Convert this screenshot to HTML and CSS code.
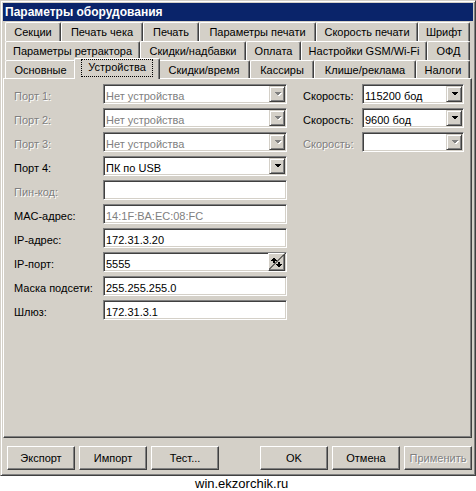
FILE: index.html
```html
<!DOCTYPE html>
<html lang="ru">
<head>
<meta charset="utf-8">
<title>Параметры оборудования</title>
<link rel="stylesheet" href="styles.css">
</head>
<body>
<div class="window">
  <div class="titlebar">Параметры оборудования</div>
  <div class="tabs">
    <div class="tabrow row1">
      <div class="tab">Секции</div>
      <div class="tab">Печать чека</div>
      <div class="tab">Печать</div>
      <div class="tab">Параметры печати</div>
      <div class="tab">Скорость печати</div>
      <div class="tab">Шрифт</div>
    </div>
    <div class="tabrow row2">
      <div class="tab">Параметры ретрактора</div>
      <div class="tab">Скидки/надбавки</div>
      <div class="tab">Оплата</div>
      <div class="tab">Настройки GSM/Wi-Fi</div>
      <div class="tab">ОФД</div>
    </div>
    <div class="tabrow row3">
      <div class="tab">Основные</div>
      <div class="tab active"><span class="focus">Устройства</span></div>
      <div class="tab">Скидки/время</div>
      <div class="tab">Кассиры</div>
      <div class="tab">Клише/реклама</div>
      <div class="tab">Налоги</div>
    </div>
  </div>
  <div class="panel">
    <div class="form">
      <div class="lbl dis">Порт 1:</div>
      <div class="field"><span class="val grey">Нет устройства</span><span class="ddbtn"><svg class="arr" width="8" height="5" viewBox="0 0 8 5" shape-rendering="crispEdges"><polygon points="1,1 8,1 4.5,4.5" fill="#fff"/><polygon points="0,0 7,0 3.5,3.5" fill="#808080"/></svg></span></div>
      <div class="lbl r-lbl">Скорость:</div>
      <div class="field r-field"><span class="val">115200 бод</span><span class="ddbtn"><svg class="arr" width="8" height="5" viewBox="0 0 8 5" shape-rendering="crispEdges"><polygon points="0,0 7,0 3.5,3.5" fill="#000"/></svg></span></div>

      <div class="lbl dis">Порт 2:</div>
      <div class="field"><span class="val grey">Нет устройства</span><span class="ddbtn"><svg class="arr" width="8" height="5" viewBox="0 0 8 5" shape-rendering="crispEdges"><polygon points="1,1 8,1 4.5,4.5" fill="#fff"/><polygon points="0,0 7,0 3.5,3.5" fill="#808080"/></svg></span></div>
      <div class="lbl r-lbl">Скорость:</div>
      <div class="field r-field"><span class="val">9600 бод</span><span class="ddbtn"><svg class="arr" width="8" height="5" viewBox="0 0 8 5" shape-rendering="crispEdges"><polygon points="0,0 7,0 3.5,3.5" fill="#000"/></svg></span></div>

      <div class="lbl dis">Порт 3:</div>
      <div class="field"><span class="val grey">Нет устройства</span><span class="ddbtn"><svg class="arr" width="8" height="5" viewBox="0 0 8 5" shape-rendering="crispEdges"><polygon points="1,1 8,1 4.5,4.5" fill="#fff"/><polygon points="0,0 7,0 3.5,3.5" fill="#808080"/></svg></span></div>
      <div class="lbl r-lbl dis">Скорость:</div>
      <div class="field r-field"><span class="val"></span><span class="ddbtn"><svg class="arr" width="8" height="5" viewBox="0 0 8 5" shape-rendering="crispEdges"><polygon points="1,1 8,1 4.5,4.5" fill="#fff"/><polygon points="0,0 7,0 3.5,3.5" fill="#808080"/></svg></span></div>

      <div class="lbl">Порт 4:</div>
      <div class="field"><span class="val">ПК по USB</span><span class="ddbtn"><svg class="arr" width="8" height="5" viewBox="0 0 8 5" shape-rendering="crispEdges"><polygon points="0,0 7,0 3.5,3.5" fill="#000"/></svg></span></div>

      <div class="lbl dis">Пин-код:</div>
      <div class="field"><span class="val"></span></div>

      <div class="lbl">MAC-адрес:</div>
      <div class="field"><span class="val grey">14:1F:BA:EC:08:FC</span></div>

      <div class="lbl">IP-адрес:</div>
      <div class="field"><span class="val">172.31.3.20</span></div>

      <div class="lbl">IP-порт:</div>
      <div class="field"><span class="val">5555</span><span class="spin"><svg width="15" height="15" viewBox="0 0 15 15" shape-rendering="crispEdges"><path d="M0 14.5 L14.5 0" stroke="#000" stroke-width="1" shape-rendering="auto"/><polygon points="1.5,6 8.5,6 5,2.5" fill="#000"/><rect x="4" y="6" width="2" height="2" fill="#000"/><polygon points="6.5,9 13.5,9 10,12.5" fill="#000"/><rect x="9" y="7" width="2" height="2" fill="#000"/></svg></span></div>

      <div class="lbl">Маска подсети:</div>
      <div class="field"><span class="val">255.255.255.0</span></div>

      <div class="lbl">Шлюз:</div>
      <div class="field"><span class="val">172.31.3.1</span></div>
    </div>
  </div>
  <div class="btnrow">
    <div class="btn">Экспорт</div>
    <div class="btn">Импорт</div>
    <div class="btn">Тест...</div>
    <div class="spacer"></div>
    <div class="btn">OK</div>
    <div class="btn">Отмена</div>
    <div class="btn dis">Применить</div>
  </div>
</div>
<div class="watermark">win.ekzorchik.ru</div>
</body>
</html>
```
FILE: styles.css
```css
* { box-sizing: border-box; }

body {
  margin: 0;
  background: #fff;
  font-family: "Liberation Sans", Arial, sans-serif;
  font-size: 11px;
  color: #000;
}

.window {
  width: 476px;
  height: 476px;
  background: #d4d0c8;
  border: 1px solid;
  border-color: #d4d0c8 #404040 #404040 #d4d0c8;
  box-shadow: inset 1px 1px #fff, inset -1px -1px #808080;
  padding: 2px;
  display: flex;
  flex-direction: column;
}

.titlebar {
  height: 18px;
  background: #0a246a;
  color: #fff;
  font-weight: bold;
  font-size: 12px;
  line-height: 18px;
  padding-left: 2px;
  white-space: nowrap;
}

.tabs {
  margin-top: 1px;
  padding: 0 2px;
}

.tabrow {
  display: grid;
  height: 19px;
}

.row1 { grid-template-columns: 56px 82px 56px 117px 102px 52px; }
.row2 { grid-template-columns: 135px 106px 55px 126px 43px; }
.row3 { grid-template-columns: 71px 82px 92px 64px 102px 54px; height: 18px; }

.tab {
  background: #d4d0c8;
  border-top: 1px solid #fff;
  border-left: 1px solid #fff;
  border-right: 1px solid #404040;
  border-radius: 2px 2px 0 0;
  box-shadow: inset -1px 0 #808080;
  text-align: center;
  line-height: 13px;
  padding-top: 3px;
  white-space: nowrap;
}

.tab.active {
  position: relative;
  z-index: 1;
  margin: -2px -2px -1px -2px;
  padding-top: 0;
}

.focus {
  display: inline-block;
  border: 1px dotted #000;
  padding: 1px 6px 2px 6px;
  line-height: 13px;
}

.panel {
  height: 360px;
  margin-right: 1px;
  border: 1px solid;
  border-color: #fff #404040 #404040 #fff;
  box-shadow: inset -1px -1px #808080;
  padding: 5px 0 0 10px;
}

.form {
  display: grid;
  grid-template-columns: 89px 184px 16px 59px 102px;
  grid-auto-rows: 20px;
  row-gap: 4px;
}

.lbl {
  grid-column: 1;
  line-height: 20px;
  padding-top: 2px;
  white-space: nowrap;
}

.form > .field { grid-column: 2; }

.form > .r-lbl { grid-column: 4; }
.form > .r-field { grid-column: 5; }

.dis {
  color: #808080;
  text-shadow: 1px 1px #fff;
}

.field {
  display: flex;
  background: #fff;
  border: 1px solid;
  border-color: #808080 #fff #fff #808080;
  box-shadow: inset 1px 1px #404040, inset -1px -1px #d4d0c8;
  padding: 1px;
}

.val {
  flex: 1;
  padding: 2px 0 0 1px;
  line-height: 16px;
  white-space: nowrap;
  overflow: hidden;
}

.val.grey { color: #808080; }

.ddbtn {
  width: 16px;
  background: #d4d0c8;
  border: 1px solid;
  border-color: #d4d0c8 #404040 #404040 #d4d0c8;
  box-shadow: inset 1px 1px #fff, inset -1px -1px #808080;
  display: flex;
  align-items: center;
  justify-content: center;
}

.arr { display: block; margin-left: 1px; }

.spin {
  width: 17px;
  margin: -1px 0 -1px 0;
  background: #d4d0c8;
  border: 1px solid;
  border-color: #fff #404040 #404040 #fff;
  box-shadow: inset -1px -1px #808080;
  display: flex;
  align-items: center;
  justify-content: center;
}

.spin svg { display: block; }

.btnrow {
  display: flex;
  gap: 4px;
  margin-top: 8px;
  padding: 0 1px 0 4px;
}

.spacer { flex: 1; }

.btn {
  width: 68px;
  height: 24px;
  background: #d4d0c8;
  border: 1px solid;
  border-color: #fff #404040 #404040 #fff;
  box-shadow: inset -1px -1px #808080;
  text-align: center;
  line-height: 22px;
  white-space: nowrap;
}

.watermark {
  font-size: 13px;
  line-height: 15px;
  padding-left: 195px;
}
```
